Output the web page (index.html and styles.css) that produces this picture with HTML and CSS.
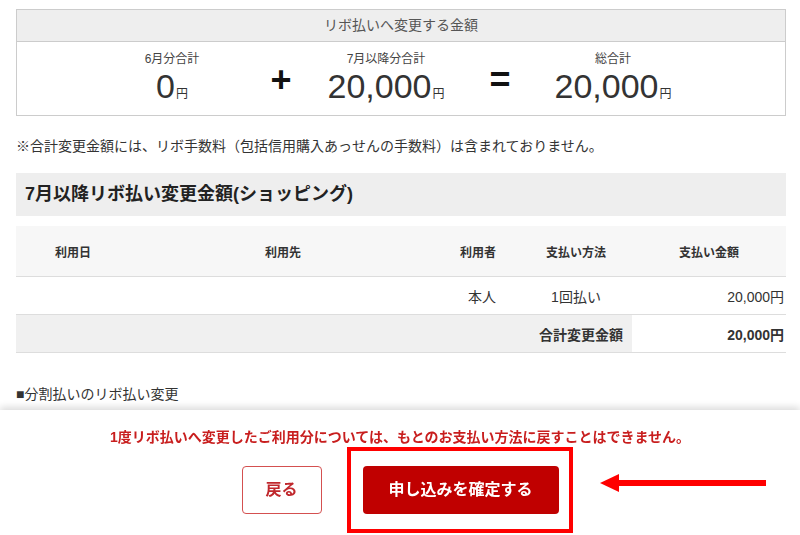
FILE: index.html
```html
<!DOCTYPE html>
<html lang="ja">
<head>
    <meta charset="UTF-8">
    <meta name="viewport" content="width=device-width, initial-scale=1.0">
    <title>リボ払い変更確認</title>
    <link rel="stylesheet" href="styles.css">
</head>
<body>
    <div class="page">
        <div class="summary">
            <div class="summary-head">リボ払いへ変更する金額</div>
            <div class="summary-body">
                <div class="sum-col col-a">
                    <div class="sum-label">6月分合計</div>
                    <div class="sum-value">0<span class="yen">円</span></div>
                </div>
                <div class="sum-op op-plus">+</div>
                <div class="sum-col col-b">
                    <div class="sum-label">7月以降分合計</div>
                    <div class="sum-value">20,000<span class="yen">円</span></div>
                </div>
                <div class="sum-op op-eq">=</div>
                <div class="sum-col col-c">
                    <div class="sum-label">総合計</div>
                    <div class="sum-value">20,000<span class="yen">円</span></div>
                </div>
            </div>
        </div>

        <p class="note">※合計変更金額には、リボ手数料（包括信用購入あっせんの手数料）は含まれておりません。</p>

        <h2 class="section-title">7月以降リボ払い変更金額(ショッピング)</h2>

        <table class="detail">
            <thead>
                <tr>
                    <th class="c-date">利用日</th>
                    <th class="c-shop">利用先</th>
                    <th class="c-user">利用者</th>
                    <th class="c-method">支払い方法</th>
                    <th class="c-amount">支払い金額</th>
                </tr>
            </thead>
            <tbody>
                <tr>
                    <td></td>
                    <td></td>
                    <td class="c-user">本人</td>
                    <td>1回払い</td>
                    <td class="c-amount">20,000円</td>
                </tr>
                <tr class="total-row">
                    <td class="total-label" colspan="4">合計変更金額</td>
                    <td class="total-amount">20,000円</td>
                </tr>
            </tbody>
        </table>

        <p class="sub-title">■分割払いのリボ払い変更</p>
        <p class="sub-text">分割払いでご利用の分につきましても、リボ払いへの変更が可能です。</p>
    </div>

    <div class="action-bar">
        <p class="warning">1度リボ払いへ変更したご利用分については、もとのお支払い方法に戻すことはできません。</p>
        <div class="buttons">
            <a href="#" class="btn btn-back">戻る</a>
            <a href="#" class="btn btn-confirm">申し込みを確定する</a>
        </div>
        <div class="mark-box"></div>
        <svg class="mark-arrow" width="170" height="24" viewBox="0 0 170 24">
            <rect x="16" y="9" width="150" height="6" fill="#ff0000"/>
            <polygon points="0,12 19,3 19,21" fill="#ff0000"/>
        </svg>
    </div>
</body>
</html>
```

FILE: styles.css
```css
body {
    margin: 0;
    font-family: "Liberation Sans", "Noto Sans CJK JP", sans-serif;
    color: #333;
    background-color: #fff;
    overflow: hidden;
}
.page {
    padding: 9px 14px 0 16px;
}
.summary {
    border: 1px solid #ccc;
}
.summary-head {
    background-color: #eee;
    border-bottom: 1px solid #ccc;
    text-align: center;
    font-size: 14px;
    color: #555;
    height: 31px;
    line-height: 31px;
}
.summary-body {
    display: flex;
    align-items: flex-start;
    padding-left: 75px;
    height: 73px;
}
.sum-col {
    text-align: center;
    padding-top: 9px;
}
.col-a { width: 160px; }
.col-b { width: 152px; }
.col-c { width: 150px; }
.sum-label {
    font-size: 12px;
    line-height: 16px;
    color: #444;
}
.sum-value {
    font-size: 34px;
    line-height: 36px;
    margin-top: 1px;
    color: #333;
}
.yen {
    font-size: 12px;
    margin-left: 1px;
}
.sum-op {
    font-size: 36px;
    font-weight: bold;
    color: #111;
    text-align: center;
    line-height: 36px;
    padding-top: 20px;
}
.op-plus { width: 58px; }
.op-eq { width: 76px; }
.note {
    font-size: 14px;
    margin: 20px 0 0;
    line-height: 20px;
}
.section-title {
    background-color: #eee;
    font-size: 18px;
    font-weight: bold;
    color: #222;
    margin: 17px 0 0;
    height: 43px;
    line-height: 43px;
    padding-left: 9px;
}
.detail {
    width: 770px;
    border-collapse: collapse;
    margin-top: 10px;
    table-layout: fixed;
}
.detail th {
    background-color: #f7f7f7;
    font-size: 12px;
    font-weight: bold;
    color: #333;
    height: 50px;
    border-bottom: 1px solid #ddd;
    text-align: center;
    padding: 0;
}
.detail td {
    font-size: 14px;
    height: 37px;
    border-bottom: 1px solid #ddd;
    padding: 0;
    text-align: center;
}
.c-date { width: 114px; }
.c-shop { width: 306px; }
.c-user { width: 60px; }
.c-method { width: 112px; }
.c-amount { width: 154px; }
.detail th.c-user, .detail td.c-user {
    text-align: right;
    padding-right: 24px;
}
.detail td.c-amount {
    text-align: right;
    padding-right: 2px;
}
.total-label {
    background-color: #f0f0f0;
    font-weight: bold;
    text-align: right !important;
    padding-right: 9px !important;
}
.total-amount {
    font-weight: bold;
    text-align: right !important;
    padding-right: 2px !important;
}
.sub-title {
    font-size: 14px;
    margin: 32px 0 0;
    line-height: 18px;
}
.sub-text {
    font-size: 14px;
    margin: 6px 0 0;
}
.action-bar {
    position: fixed;
    left: 0;
    right: 0;
    bottom: 0;
    height: 125px;
    background-color: #fff;
    box-shadow: 0 -3px 7px rgba(0,0,0,0.14);
}
.warning {
    margin: 17px 0 0;
    text-align: center;
    font-size: 14px;
    font-weight: bold;
    color: #c81e1e;
    line-height: 20px;
}
.buttons {
    display: flex;
    justify-content: center;
    gap: 41px;
    margin-top: 19px;
}
.btn {
    display: block;
    height: 48px;
    line-height: 48px;
    box-sizing: border-box;
    border-radius: 4px;
    text-align: center;
    text-decoration: none;
    font-size: 16px;
    font-weight: bold;
}
.btn-back {
    width: 80px;
    border: 1px solid #d45050;
    color: #c0282d;
    line-height: 46px;
}
.btn-confirm {
    width: 196px;
    background-color: #c00000;
    color: #fff;
}
.mark-box {
    position: absolute;
    left: 347px;
    top: 37px;
    width: 226px;
    height: 86px;
    box-sizing: border-box;
    border: 4px solid #ff0000;
}
.mark-arrow {
    position: absolute;
    left: 600px;
    top: 61px;
}
```
